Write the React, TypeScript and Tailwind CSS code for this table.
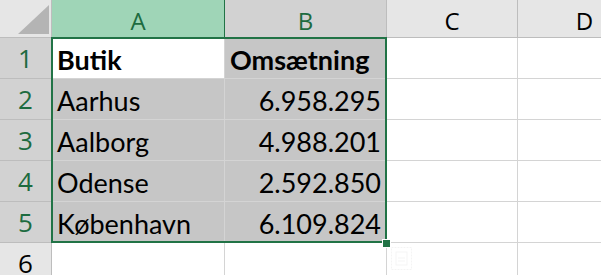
const rows = [
  { n: 1, a: 'Butik', b: 'Omsætning', bold: true },
  { n: 2, a: 'Aarhus', b: '6.958.295' },
  { n: 3, a: 'Aalborg', b: '4.988.201' },
  { n: 4, a: 'Odense', b: '2.592.850' },
  { n: 5, a: 'København', b: '6.109.824' },
]

const headFont = { fontFamily: '"Open Sans", "Noto Sans", sans-serif' }
const cellFont = { fontFamily: 'Lato, "Noto Sans", sans-serif' }

export default function App() {
  return (
    <div className="relative w-[601px] h-[275px] overflow-hidden bg-white">
      <div className="grid grid-cols-[52px_173px_162px_131px_1fr] grid-rows-[38px_41px_41px_41px_41px_41px_41px]">
        {/* corner */}
        <div className="relative bg-[#e6e6e6] border-r border-b border-[#bdbdbd]">
          <svg className="absolute left-0 top-0" width="51" height="37" viewBox="0 0 51 37">
            <polygon points="18,34 49,34 49,5" fill="#b4b4b4" />
          </svg>
        </div>

        {/* column headers */}
        <div className="flex items-center justify-center bg-[#9fd5b7] border-r border-b border-[#217346] text-[24px] text-[#1d6b40] pt-[4px]" style={headFont}>A</div>
        <div className="flex items-center justify-center bg-[#d2d2d2] border-r border-b border-[#bdbdbd] text-[24px] text-[#1d6b40] pt-[4px]" style={headFont}>B</div>
        <div className="flex items-center justify-center bg-[#e6e6e6] border-r border-b border-[#bdbdbd] text-[24px] text-black pt-[4px]" style={headFont}>C</div>
        <div className="flex items-center justify-center bg-[#e6e6e6] border-b border-[#bdbdbd] text-[24px] text-black pt-[4px] pl-[50px]" style={headFont}>D</div>

        {rows.map((r) => (
          <div key={r.n} className="contents">
            <div className="flex items-center justify-center bg-[#d2d2d2] border-r border-b border-[#bdbdbd] text-[26px] text-[#1d6b40] pt-[1px]" style={headFont}>
              {r.n}
            </div>
            <div
              className={`flex items-end pl-[5px] pb-[3px] border-r border-b border-[#d4d4d4] text-[27px] leading-[31px] text-black ${r.n === 1 ? 'bg-white font-bold' : 'bg-[#c6c6c6]'}`}
              style={cellFont}
            >
              {r.a}
            </div>
            <div
              className={`flex items-end pb-[3px] bg-[#c6c6c6] border-r border-b border-[#d4d4d4] text-[27px] leading-[31px] text-black ${r.bold ? 'font-bold pl-[5px]' : 'justify-end pr-[5px]'}`}
              style={cellFont}
            >
              {r.b}
            </div>
            <div className="bg-white border-r border-b border-[#d4d4d4]" />
            <div className="bg-white border-b border-[#d4d4d4]" />
          </div>
        ))}

        {/* row 6 */}
        <div className="flex items-center justify-center bg-[#e6e6e6] border-r border-b border-[#bdbdbd] text-[26px] text-black pt-[1px]" style={headFont}>
          6
        </div>
        <div className="bg-white border-r border-b border-[#d4d4d4]" />
        <div className="bg-white border-r border-b border-[#d4d4d4]" />
        <div className="bg-white border-r border-b border-[#d4d4d4]" />
        <div className="bg-white border-b border-[#d4d4d4]" />
      </div>

      {/* selection border */}
      <div className="absolute left-[51px] top-[37px] w-[336px] h-[206px] border-2 border-[#217346] pointer-events-none" />
      {/* fill handle */}
      <div className="absolute left-[382px] top-[239px] w-[9px] h-[9px] bg-[#217346] border border-white" />

      {/* quick analysis ghost icon */}
      <svg className="absolute left-[390px] top-[246px]" width="24" height="26" viewBox="0 0 24 26">
        <rect x="1.5" y="1.5" width="20" height="22" fill="none" stroke="#f4f4f4" strokeDasharray="2 1" />
        <rect x="6" y="6" width="11" height="13" fill="none" stroke="#f5f5f5" />
        <line x1="8" y1="12" x2="15" y2="12" stroke="#f5f5f5" />
        <line x1="8" y1="15" x2="15" y2="15" stroke="#f5f5f5" />
      </svg>
    </div>
  )
}
